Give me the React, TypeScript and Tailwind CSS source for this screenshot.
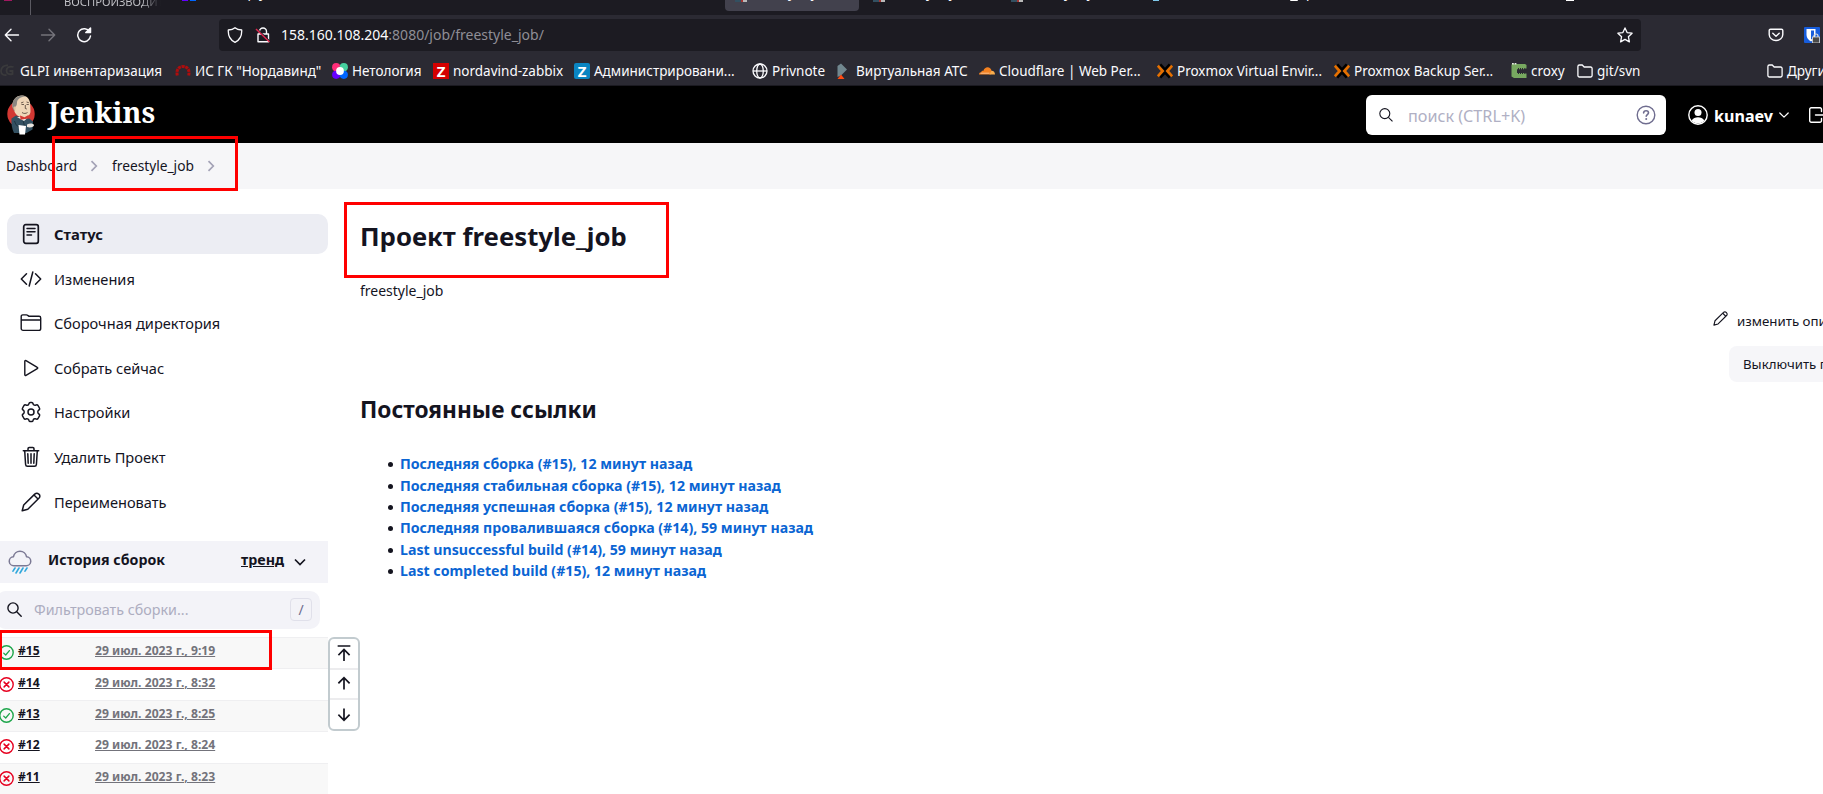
import type { ReactNode } from "react";

type BookmarkProps = { icon: ReactNode; label: string; className: string };

function Bookmark({ icon, label, className }: BookmarkProps) {
  return (
    <div className={`flex shrink-0 items-center gap-1 whitespace-nowrap ${className}`}>
      {icon}
      <span className="text-[13.500px] leading-5">{label}</span>
    </div>
  );
}

const GlpiIcon = () => (
  <svg className="size-4 shrink-0" viewBox="0 0 16 16" fill="none" stroke="#3a3a3c" strokeWidth="1.8">
    <path d="M8 2.500C4 2 1 4.500 1 8s3 4.500 5.500 4" />
    <path d="M13.500 4C9 2.500 6.500 5 6.500 7.500S8 12 12.500 11V8H9.500" />
  </svg>
);

const ArchIcon = () => (
  <svg className="size-4 shrink-0" viewBox="0 0 16 16" fill="none" stroke="#b00d0d" strokeWidth="3" strokeDasharray="3 .7">
    <path d="M2.300 12.500C1 7 3.500 3.500 8 3.500s7 3.500 5.700 9" />
  </svg>
);

const NetologyIcon = () => (
  <svg className="size-4 shrink-0" viewBox="0 0 16 16">
    <circle cx="4.200" cy="4.200" r="4.100" fill="#ff2e79" />
    <circle cx="11.800" cy="4.200" r="4.100" fill="#45d09e" />
    <circle cx="4.200" cy="11.800" r="4.100" fill="#6400ff" />
    <circle cx="11.800" cy="11.800" r="4.100" fill="#0066ff" />
    <circle cx="8" cy="8" r="3.900" fill="#fff" />
  </svg>
);

const ZabbixIcon = ({ className }: { className: string }) => (
  <span className={`flex size-4 shrink-0 items-center justify-center text-[15px] leading-4 font-bold text-white ${className}`}>Z</span>
);

const GlobeIcon = () => (
  <svg className="size-4 shrink-0" viewBox="0 0 16 16" fill="none" stroke="#fbfbfe" strokeWidth="1.300">
    <circle cx="8" cy="8" r="7" />
    <ellipse cx="8" cy="8" rx="3.300" ry="7" />
    <path d="M1 8h14" />
  </svg>
);

const PbxIcon = () => (
  <svg className="size-4 shrink-0" viewBox="0 0 16 16">
    <path d="M5 .5 11 6.500 5 12.500 1.500 14V3z" fill="#71878f" />
    <path d="M1.500 16 5 11.500 8.500 16z" fill="#ff4b12" />
  </svg>
);

const CloudflareIcon = () => (
  <svg className="size-4 shrink-0" viewBox="0 0 16 16">
    <path d="M0 11.500c0-1.500 1-2.300 2.300-2.200C2.300 8 3.500 7.500 4.300 8 5 5.500 6.800 4.300 8.600 4.300c2 0 3.500 1.300 3.900 3.300l-1 3.900z" fill="#f48120" />
    <path d="M10.500 11.500 12.300 7.800c2-.3 3.700 1.300 3.700 3.700z" fill="#faad4d" />
    <path d="M1.500 10.200h9" stroke="#fff" strokeWidth=".5" />
  </svg>
);

const ProxmoxIcon = () => (
  <svg className="size-4 shrink-0" viewBox="0 0 16 16" fill="none" strokeWidth="2.700">
    <path d="M3.200 1.300 8 6.600l4.800-5.300M3.200 14.700 8 9.400l4.800 5.300" stroke="#000" />
    <path d="M.8 2.700 5.600 8 .8 13.300M15.200 2.700 10.400 8l4.800 5.300" stroke="#e57000" />
  </svg>
);

const CroxyIcon = () => (
  <svg className="size-4 shrink-0" viewBox="0 0 16 16">
    <path d="M1 1h13l1.500 1v3.500H14L13 5H6v6h7l1-.5h1.500V15H3L.5 13.500V2z" fill="#77a860" />
    <path d="M1 .8h5" stroke="#e8efe4" strokeWidth="1.400" strokeDasharray="1.800 .8" />
    <path d="M6 5.500h8M6 10.800h8" stroke="#77a860" strokeWidth="1.500" strokeDasharray="1 1" />
  </svg>
);

const FolderSmall = () => (
  <svg className="size-4 shrink-0" viewBox="0 0 16 16" fill="none" stroke="#fbfbfe" strokeWidth="1.300">
    <path d="M.9 12.500v-9A1.500 1.500 0 0 1 2.400 2h2.800l2 2h6.400a1.500 1.500 0 0 1 1.500 1.500v7a1.500 1.500 0 0 1-1.500 1.500H2.400a1.500 1.500 0 0 1-1.500-1.500z" />
  </svg>
);

const Pencil = ({ className }: { className: string }) => (
  <svg className={`shrink-0 ${className}`} viewBox="0 0 20 20" fill="none" stroke="#14141f" strokeWidth="1.500" strokeLinejoin="round">
    <path d="M1.200 18.800 2.700 13 14 1.900a2.500 2.500 0 0 1 3.600 0l.5.500a2.500 2.500 0 0 1 0 3.600L6.800 17.300z" />
    <path d="M13 3l4 4" />
  </svg>
);

const sidebarStroke = { fill: "none", stroke: "#14141f", strokeWidth: 1.5, strokeLinejoin: "round" as const, strokeLinecap: "round" as const };

const StatusIcon = () => (
  <svg className="size-[22px]" viewBox="0 0 22 22" {...sidebarStroke}>
    <rect x="3.700" y="1.700" width="14.600" height="18.600" rx="2" strokeWidth="1.700" />
    <path d="M7 5.500h8M7 8.800h8M7 12h4.500" />
  </svg>
);

const CodeIcon = () => (
  <svg className="size-[22px]" viewBox="0 0 22 22" {...sidebarStroke} strokeWidth="1.500">
    <path d="M6.500 5.800 1.300 11l5.200 5.200M15.500 5.800l5.200 5.200-5.200 5.200M12.800 4 9.200 18" />
  </svg>
);

const FolderIcon = () => (
  <svg className="size-[22px]" viewBox="0 0 22 22" {...sidebarStroke} strokeWidth="1.400">
    <path d="M1.200 16.500v-12a1.600 1.600 0 0 1 1.600-1.600h3.600c1.500 0 1.800 1.400 3.300 1.400h9.400a1.600 1.600 0 0 1 1.600 1.600v10.600a1.900 1.900 0 0 1-1.900 1.900H3.100a1.900 1.900 0 0 1-1.900-1.900zM1.200 8h19.500" />
  </svg>
);

const PlayIcon = () => (
  <svg className="size-[22px]" viewBox="0 0 22 22" {...sidebarStroke} strokeWidth="1.400">
    <path d="M4.800 4.300v13.400a.8.800 0 0 0 1.200.7l11.300-6.700a.8.800 0 0 0 0-1.400L6 3.600a.8.800 0 0 0-1.200.7z" />
  </svg>
);

const GearIcon = () => (
  <svg className="size-[22px]" viewBox="0 0 22 22" {...sidebarStroke} strokeWidth="1.500">
    <circle cx="11" cy="11" r="3" />
    <path d="M8.900 2.800c.2-.8.6-1.300 1.300-1.300h1.600c.7 0 1.100.5 1.300 1.300.2 1 1.200 1.600 2.200 1.400l1-.3c.8-.2 1.300 0 1.700.6l1.500 2.600c.4.600.2 1.200-.4 1.700l-.6.500c-.9.800-.9 2.600 0 3.400l.6.500c.6.500.8 1.100.4 1.700L18 17.500c-.4.600-.9.800-1.700.6l-1-.3c-1-.2-2 .4-2.200 1.400-.2.800-.6 1.300-1.300 1.300h-1.600c-.7 0-1.100-.5-1.300-1.300-.2-1-1.200-1.600-2.200-1.400l-1 .3c-.8.200-1.300 0-1.700-.6l-1.500-2.600c-.4-.6-.2-1.200.4-1.700l.6-.5c.9-.8.9-2.600 0-3.400l-.6-.5c-.6-.5-.8-1.100-.4-1.700L4 4.500c.4-.6.900-.8 1.700-.6l1 .3c1 .2 2-.4 2.200-1.400z" />
  </svg>
);

const TrashIcon = () => (
  <svg className="size-[22px]" viewBox="0 0 22 22" {...sidebarStroke} strokeWidth="1.500">
    <path d="M3.300 4.700h15.400M4.700 4.700l.9 13.800a1.900 1.900 0 0 0 1.900 1.800h7a1.900 1.900 0 0 0 1.900-1.800l.9-13.800M8 4.500V2.700c0-.7.500-1.200 1.200-1.200h3.600c.7 0 1.200.5 1.200 1.200v1.800M11 7.700v9.500M7.800 7.700l.4 9.500M14.200 7.700l-.4 9.500" />
  </svg>
);

const tasks: { label: string; icon: ReactNode; active?: boolean }[] = [
  { label: "Статус", icon: <StatusIcon />, active: true },
  { label: "Изменения", icon: <CodeIcon /> },
  { label: "Сборочная директория", icon: <FolderIcon /> },
  { label: "Собрать сейчас", icon: <PlayIcon /> },
  { label: "Настройки", icon: <GearIcon /> },
  { label: "Удалить Проект", icon: <TrashIcon /> },
  { label: "Переименовать", icon: <Pencil className="size-[20px]" /> },
];

const builds = [
  { id: "#15", date: "29 июл. 2023 г., 9:19", ok: true },
  { id: "#14", date: "29 июл. 2023 г., 8:32", ok: false },
  { id: "#13", date: "29 июл. 2023 г., 8:25", ok: true },
  { id: "#12", date: "29 июл. 2023 г., 8:24", ok: false },
  { id: "#11", date: "29 июл. 2023 г., 8:23", ok: false },
];

const links = [
  "Последняя сборка (#15), 12 минут назад",
  "Последняя стабильная сборка (#15), 12 минут назад",
  "Последняя успешная сборка (#15), 12 минут назад",
  "Последняя провалившаяся сборка (#14), 59 минут назад",
  "Last unsuccessful build (#14), 59 минут назад",
  "Last completed build (#15), 12 минут назад",
];

const BuildStatus = ({ ok }: { ok: boolean }) => (
  <svg className="-mt-px -ml-[1.500px] size-[15px] shrink-0" viewBox="0 0 15 15" fill="none" stroke={ok ? "#1ea64b" : "#e6001f"} strokeLinecap="round" strokeLinejoin="round">
    <circle cx="7.500" cy="7.500" r="6.700" strokeWidth="1.400" />
    {ok ? <path d="M4.700 8.100l2 1.900 3.700-4.400" strokeWidth="1.300" /> : <path d="M5.100 5.100l4.800 4.800M9.900 5.100 5.100 9.900" strokeWidth="1.500" />}
  </svg>
);

const JenkinsLogo = () => (
  <svg className="h-10 w-7 shrink-0" viewBox="0 0 28 40">
    <circle cx="14" cy="19" r="13.700" fill="#d33833" />
    <path d="M5.500 12C5 5 9 .5 15 .5c5 0 8.500 4 8.300 10.500l.2 5c0 4-3 6.500-7 6.500-5.500 0-9-4-9.500-8z" fill="#efd6b8" />
    <path d="M7.500 16C4.500 14 4.500 6 8.500 3 11 .5 16-.5 19 1.500 15 1.500 11 3 10 7c0 3-.5 4-2 5z" fill="#8a8781" />
    <path d="M8 15.500c-1.500-1-2.300-4-.5-4s1 3 .5 4z" fill="#dfc09c" />
    <path d="M14.500 9.500h2.500M19.500 9.500h2.300M18.300 10v3.500l1.500.5M15 17.500c2 1.500 4 1 5.500 0M14 8l2.500-1M19.500 7l2.300.7" stroke="#4a3b31" strokeWidth=".8" fill="none" />
    <path d="M4.500 23.500 9 20.500l7 3 5-1 5 4-.5 8-6 3.500H7C5 34 4 28 4.500 23.500z" fill="#335061" />
    <path d="M10 22l7 4 3.500-3-2-1z" fill="#f3eee8" />
    <path d="m13 20.500 4.500 1.800 4-2.300.8 3.500-4.300.5-4.500.8z" fill="#d33833" />
    <path d="M16 26c1.500 3 1.500 6 .5 9M7.500 26c1 3 2 5 5 6.500" stroke="#1d3440" strokeWidth="1" fill="none" />
    <path d="M11.500 30l7.500 1-1 8.500h-5.500z" fill="#fff" />
    <path d="M20 29.500c2.500-1.500 6-1.500 7 .5 0 2-3.500 3-7 2z" fill="#e8e4de" />
  </svg>
);

const JenkinsFavicon = () => (
  <span className="flex h-0.5 w-3 shrink-0">
    <span className="w-1.5 bg-[#335061]" />
    <span className="w-0.5 bg-[#a33431]" />
    <span className="w-1 bg-[#b9b9b9]" />
  </span>
);

function TabStrip() {
  return (
    <div className="flex h-[15px] items-start overflow-hidden bg-[#1c1b22] text-[13.300px] leading-5 whitespace-pre text-[#fbfbfe]">
      <div className="flex h-[15px] w-[31px] shrink-0 border-r border-[#5b5a62] pl-1">
        <span className="h-px w-2 bg-[#a01860]" />
      </div>
      <div className="h-[15px] w-[149px] shrink-0 overflow-hidden pl-[33px]">
        <div className="-mt-[8px] w-[97px] overflow-hidden bg-linear-to-r from-[#c5c5ca] from-80% to-[#1c1b22] bg-clip-text text-[11.200px] leading-5 text-transparent">ВОСПРОИЗВОДИТСЯ</div>
      </div>
      <div className="flex w-[138px] shrink-0 items-start">
        <span className="ml-0.5 h-px w-1.5 bg-[#6400ff]" />
        <span className="ml-0.5 h-px w-1.5 bg-[#0066ff]" />
        <span className="-mt-[17px] ml-[18px]">д     др у</span>
      </div>
      <span className="-mt-[17px] w-[140px] shrink-0 pl-1">д</span>
      <span className="-mt-[17px] w-[138px] shrink-0 pl-0.5">д</span>
      <span className="-mt-[17px] w-[129px] shrink-0 pl-0.5">д</span>
      <div className="flex h-[11px] w-[134px] shrink-0 items-start rounded-b bg-[#42414d] pl-2.5">
        <JenkinsFavicon />
        <span className="-mt-[17px] ml-[5px]">freestyle_job</span>
      </div>
      <div className="flex w-[138px] shrink-0 items-start pl-[14px]">
        <JenkinsFavicon />
        <span className="-mt-[17px] ml-[5px]">freestyle_job</span>
      </div>
      <div className="flex w-[138px] shrink-0 items-start pl-[14px]">
        <JenkinsFavicon />
        <span className="-mt-[17px] ml-[5px]">freestyle_job</span>
      </div>
      <div className="flex w-[138px] shrink-0 pl-[18px]">
        <span className="h-px w-1.5 bg-[#7fc8ea]" />
      </div>
      <div className="flex w-[277px] shrink-0 items-start pl-[17px]">
        <span className="h-px w-2 rounded-b bg-white" />
        <span className="-mt-[17px] ml-2">р</span>
      </div>
      <div className="flex w-[177px] shrink-0 pl-[16px]">
        <span className="h-px w-2 bg-white" />
      </div>
      <span className="-mt-[17px]">д</span>
    </div>
  );
}

function BrowserChrome() {
  return (
    <div className="flex h-[86px] flex-col bg-[#2b2a33] text-[#fbfbfe]">
      <TabStrip />
      <div className="flex h-10 shrink-0 items-center overflow-hidden pl-1">
        <svg className="size-4 shrink-0" viewBox="0 0 16 16" fill="none" stroke="#fbfbfe" strokeWidth="1.400" strokeLinecap="round" strokeLinejoin="round">
          <path d="M14.500 8H1.300M7 2.300 1.300 8 7 13.700" />
        </svg>
        <svg className="ml-5 size-4 shrink-0" viewBox="0 0 16 16" fill="none" stroke="#75747b" strokeWidth="1.400" strokeLinecap="round" strokeLinejoin="round">
          <path d="M1.500 8h13.200M9 2.300 14.700 8 9 13.700" />
        </svg>
        <svg className="ml-5 size-4 shrink-0" viewBox="0 0 16 16" fill="none" stroke="#fbfbfe" strokeWidth="1.500" strokeLinecap="round" strokeLinejoin="round">
          <path d="M13.700 5A6.400 6.400 0 1 0 14.500 9" />
          <path d="M9.800 5.500h4.700V1z" fill="#fbfbfe" />
        </svg>
        <div className="ml-[127px] flex h-8 w-[1422px] shrink-0 items-center rounded bg-[#1c1b22] pr-2 pl-2">
          <svg className="size-4" viewBox="0 0 16 16" fill="none" stroke="#fbfbfe" strokeWidth="1.300" strokeLinejoin="round">
            <path d="M8 .8C6.300 2.300 3.800 2.900 1.300 3 1 8.500 3 13 8 15.300 13 13 15 8.500 14.700 3 12.200 2.900 9.700 2.300 8 .8z" />
          </svg>
          <svg className="ml-3 size-4" viewBox="0 0 16 16" fill="none">
            <path d="M4.500 7V4.500a3.500 3.500 0 0 1 7 0V7M3 7h10.500v7.800H3z" stroke="#fbfbfe" strokeWidth="1.400" strokeLinejoin="round" />
            <path d="M2 2 15 14.500" stroke="#1c1b22" strokeWidth="1.500" />
            <path d="M1 2 14.500 15" stroke="#e22850" strokeWidth="1.400" />
          </svg>
          <span className="ml-[10px] text-[14px] leading-5">158.160.108.204<span className="text-[#8f8e96]">:8080/job/freestyle_job/</span></span>
          <svg className="ml-auto size-4" viewBox="0 0 16 16" fill="none" stroke="#fbfbfe" strokeWidth="1.300" strokeLinejoin="round">
            <path d="M8 .9l2.100 4.700 5 .6-3.700 3.500 1 5.200L8 12.400l-4.400 2.500 1-5.200L.9 6.200l5-.6z" />
          </svg>
        </div>
        <svg className="ml-[127px] size-4 shrink-0" viewBox="0 0 16 16" fill="none" stroke="#fbfbfe" strokeWidth="1.400" strokeLinecap="round" strokeLinejoin="round">
          <path d="M2.500 2.200h11a1.300 1.300 0 0 1 1.300 1.300v4a6.800 6 0 0 1-13.600 0v-4a1.300 1.300 0 0 1 1.300-1.300z" />
          <path d="M4.800 6.300 8 9.300l3.200-3" />
        </svg>
        <svg className="ml-5 size-4 shrink-0" viewBox="0 0 16 16">
          <rect width="16" height="16" rx="1" fill="#175ddc" />
          <path d="M2.500 2h9v6c0 3-2 5-4.500 6.500C4.500 13 2.500 11 2.500 8z" fill="#fff" />
          <path d="M7 3.500h3V8c0 2-1.200 3.500-3 4.500z" fill="#175ddc" />
          <rect x="8.500" y="10" width="7" height="6" fill="#4a4a4a" stroke="#ddd" strokeWidth=".8" />
          <path d="M10 10V9a2 2 0 0 1 4 0v1" stroke="#ddd" strokeWidth="1.200" fill="none" />
        </svg>
      </div>
      <div className="flex h-[31px] shrink-0 items-center overflow-hidden border-b border-[#1b1a21] pt-[2px]">
        <Bookmark className="w-[175px]" icon={<GlpiIcon />} label="GLPI инвентаризация" />
        <Bookmark className="w-[157px]" icon={<ArchIcon />} label={'ИС ГК "Нордавинд"'} />
        <Bookmark className="w-[101px]" icon={<NetologyIcon />} label="Нетология" />
        <Bookmark className="w-[141px]" icon={<ZabbixIcon className="bg-[#d40000]" />} label="nordavind-zabbix" />
        <Bookmark className="w-[178px]" icon={<ZabbixIcon className="rounded-[2px] bg-[#0a85c2]" />} label="Администрировани..." />
        <Bookmark className="w-[84px]" icon={<GlobeIcon />} label="Privnote" />
        <Bookmark className="w-[143px]" icon={<PbxIcon />} label="Виртуальная АТС" />
        <Bookmark className="w-[178px]" icon={<CloudflareIcon />} label="Cloudflare | Web Per..." />
        <Bookmark className="w-[177px]" icon={<ProxmoxIcon />} label="Proxmox Virtual Envir..." />
        <Bookmark className="w-[177px]" icon={<ProxmoxIcon />} label="Proxmox Backup Ser..." />
        <Bookmark className="w-[66px]" icon={<CroxyIcon />} label="croxy" />
        <Bookmark className="w-[190px]" icon={<FolderSmall />} label="git/svn" />
        <Bookmark className="w-[120px]" icon={<FolderSmall />} label="Другие закладки" />
      </div>
    </div>
  );
}

function Header() {
  return (
    <header className="flex h-[57px] items-center overflow-hidden bg-black pl-[7px] text-white">
      <JenkinsLogo />
      <span className="ml-[13px] pb-[5px] font-['Noto_Serif','DejaVu_Serif',serif] text-[28.400px] leading-9 font-bold">Jenkins</span>
      <div className="ml-auto flex h-10 w-[300px] shrink-0 items-center rounded-md bg-white pr-[10px] pl-[13px]">
        <svg className="size-[14px]" viewBox="0 0 14 14" fill="none" stroke="#14141f" strokeWidth="1.100">
          <circle cx="5.800" cy="5.600" r="5" />
          <path d="M9.400 9.300 13.500 13.400" />
        </svg>
        <span className="mt-0.5 ml-[15px] text-[16.200px] leading-6 text-[#b0b0c4]">поиск (CTRL+K)</span>
        <svg className="ml-auto size-5" viewBox="0 0 20 20" fill="none" stroke="#6f6d8f" strokeWidth="1.400" strokeLinecap="round">
          <circle cx="10" cy="10" r="8.800" />
          <path d="M7.600 7.900c.1-1.500 1.200-2.200 2.500-2.200s2.400.8 2.400 2.100c0 1.600-2.300 1.900-2.300 3.500" strokeWidth="1.600" />
          <circle cx="10.100" cy="14" r=".5" strokeWidth="1" fill="#6f6d8f" />
        </svg>
      </div>
      <div className="flex w-[157px] shrink-0 items-center pl-[22px]">
        <svg className="size-5 shrink-0" viewBox="0 0 20 20">
          <circle cx="10" cy="10" r="9.200" fill="none" stroke="#fff" strokeWidth="1.400" />
          <circle cx="10" cy="7.500" r="3.500" fill="#fff" />
          <path d="M3.700 15.500C5 13 7.500 12.300 10 12.300s5 .7 6.300 3.200C14.500 17.700 12 18.500 10 18.500s-4.500-.8-6.300-3z" fill="#fff" />
        </svg>
        <span className="mt-0.5 ml-[6px] text-[16.100px] leading-6 font-bold">kunaev</span>
        <svg className="ml-[6px] size-[10px] shrink-0" viewBox="0 0 10 10" fill="none" stroke="#fff" strokeWidth="1.200" strokeLinecap="round" strokeLinejoin="round">
          <path d="M.8 3 5 7.200 9.200 3" />
        </svg>
        <svg className="ml-[20px] h-4 w-5 shrink-0" viewBox="0 0 20 16" fill="none" stroke="#fff" strokeWidth="1.400" strokeLinecap="round" strokeLinejoin="round">
          <path d="M12.500 4.500V2.200A1.500 1.500 0 0 0 11 .7H2.200A1.500 1.500 0 0 0 .7 2.200v11.600a1.500 1.500 0 0 0 1.500 1.500H11a1.500 1.500 0 0 0 1.500-1.500v-2.300M6.500 8h12" />
        </svg>
      </div>
    </header>
  );
}

const Crumb = ({ label, className }: { label: string; className: string }) => (
  <div className={`flex items-center ${className}`}>
    <span className="text-[13.750px] leading-5">{label}</span>
    <svg className="ml-auto h-3 w-2" viewBox="0 0 8 12" fill="none" stroke="#a3a2b6" strokeWidth="1.700">
      <path d="M1.500 1.200 6.300 6 1.500 10.800" />
    </svg>
  </div>
);

const ScrollButton = ({ children }: { children: ReactNode }) => (
  <div className="flex flex-1 items-center justify-center">
    <svg className="h-4 w-[14px]" viewBox="0 0 14 16" fill="none" stroke="#14141f" strokeWidth="1.700" strokeLinecap="square">{children}</svg>
  </div>
);

function Sidebar() {
  return (
    <aside className="w-[328px] shrink-0 pt-[25px]">
      <nav className="flex flex-col gap-[4.600px] pl-[7px]">
        {tasks.map((t) => (
          <div key={t.label} className={`flex h-10 items-center rounded-[10px] pl-[13px] ${t.active ? "bg-[#ecedf3]" : ""}`}>
            <span className="flex w-[22px] justify-center">{t.icon}</span>
            <span className={`ml-3 leading-5 ${t.active ? "text-[14.800px] font-bold" : "text-[14.600px]"}`}>{t.label}</span>
          </div>
        ))}
      </nav>
      <div className="mt-[19.400px] flex h-[42px] items-center bg-[#f3f3f8] pl-2 font-bold">
        <svg className="size-6" viewBox="0 0 24 24" fill="none" strokeLinecap="round" strokeLinejoin="round">
          <path d="M6 15.700a4.500 4.500 0 0 1-.5-9C6 3.500 8.700 1.200 12 1.200s6 2.300 6.500 5.500a4.500 4.500 0 0 1-.5 9z" stroke="#7b7994" strokeWidth="1.500" />
          <path d="M7 18l-2 3.200M11 18l-3 5M15 18l-3 5M19 18l-2 3.200" stroke="#30a8dc" strokeWidth="1.600" />
        </svg>
        <span className="mb-1 ml-4 text-[14.200px] leading-5">История сборок</span>
        <span className="mb-1 ml-[76px] text-[14.300px] leading-5 underline">тренд</span>
        <svg className="ml-[9.500px] size-3" viewBox="0 0 12 12" fill="none" stroke="#14141f" strokeWidth="1.700">
          <path d="M1 3.500 6 8.500 11 3.500" />
        </svg>
      </div>
      <div className="mt-2 -ml-1 flex h-[38px] w-[324px] items-center rounded-[10px] bg-[#f3f3f8] pr-2 pl-[11px]">
        <svg className="size-[15px]" viewBox="0 0 15 15" fill="none" stroke="#14141f" strokeWidth="1.400" strokeLinecap="round">
          <circle cx="6" cy="6" r="5.100" />
          <path d="M10 10l4.200 4.200" />
        </svg>
        <span className="ml-3 text-[14.300px] leading-5 text-[#adadc0]">Фильтровать сборки...</span>
        <span className="ml-auto flex h-[23px] w-[22px] items-center justify-center rounded border border-[#e0e0ea] text-[14px] text-[#6f6d8f]">/</span>
      </div>
      <div className="mt-2 flex flex-col">
        {builds.map((b, i) => (
          <div key={b.id} className={`flex h-[31.400px] items-center border-t border-[#efeff1] text-[12.150px] leading-4 font-bold ${i % 2 === 0 ? "bg-[#f8f8f8]" : ""}`}>
            <BuildStatus ok={b.ok} />
            <span className="mb-[4px] ml-[4.500px] w-[77px] underline">{b.id}</span>
            <span className="mb-[4px] text-[#73737b] underline">{b.date}</span>
          </div>
        ))}
      </div>
    </aside>
  );
}

export default function App() {
  return (
    <div className="relative flex h-[794px] w-full flex-col overflow-hidden bg-white font-['Noto_Sans',sans-serif] text-[#14141f]">
      <BrowserChrome />
      <Header />
      <div className="flex h-[46px] shrink-0 items-center bg-[#f6f6f8] pl-[6px]">
        <Crumb label="Dashboard" className="w-[92px]" />
        <Crumb label="freestyle_job" className="ml-[14px] w-[103px]" />
      </div>
      <div className="flex min-h-0 flex-1">
        <Sidebar />
        <div className="mt-[448px] flex h-[94px] w-8 shrink-0 flex-col divide-y-2 divide-[#ececee] rounded-md border-2 border-[#c2cbcf] bg-white">
          <ScrollButton><path d="M1.500 1h11M7 15.200V5M2 9.500l5-5 5 5" /></ScrollButton>
          <ScrollButton><path d="M7 12.700V2M2 6.700l5-5 5 5" /></ScrollButton>
          <ScrollButton><path d="M7 2.300V13M2 8.300l5 5 5-5" /></ScrollButton>
        </div>
        <main className="min-w-0 flex-1 overflow-hidden pt-[29px]">
          <h1 className="text-[25.750px] leading-9 font-bold">Проект freestyle_job</h1>
          <p className="mt-[26px] text-[14px] leading-[21px]">freestyle_job</p>
          <div className="mt-[10px] flex items-center pl-[1353px] whitespace-nowrap">
            <Pencil className="mb-[5px] size-[15px]" />
            <span className="ml-[9px] text-[13.300px] leading-5">изменить описание</span>
          </div>
          <div className="mt-[15px] ml-[1369px] flex h-9 w-[140px] items-center rounded-lg bg-[#f6f6f9] pt-[2px] pl-[14px] text-[13.240px] whitespace-nowrap">
            Выключить проект
          </div>
          <h2 className="mt-[13px] text-[22.700px] leading-[30px] font-bold">Постоянные ссылки</h2>
          <ul className="mt-[28px]">
            {links.map((l) => (
              <li key={l} className="flex h-[21.400px] items-center pl-[28px]">
                <span className="mt-[2px] size-[5px] rounded-full bg-[#14141f]" />
                <span className="ml-[7px] text-[14.160px] leading-[21px] font-bold text-[#0b65d3]">{l}</span>
              </li>
            ))}
          </ul>
        </main>
      </div>
      <div className="absolute top-[136px] left-[52px] h-[55px] w-[186px] border-[3px] border-[#f00]" />
      <div className="absolute top-[202px] left-[344px] h-[76px] w-[325px] border-[3px] border-[#f00]" />
      <div className="absolute top-[630px] -left-px h-[40px] w-[273px] border-[3px] border-[#f00]" />
    </div>
  );
}
